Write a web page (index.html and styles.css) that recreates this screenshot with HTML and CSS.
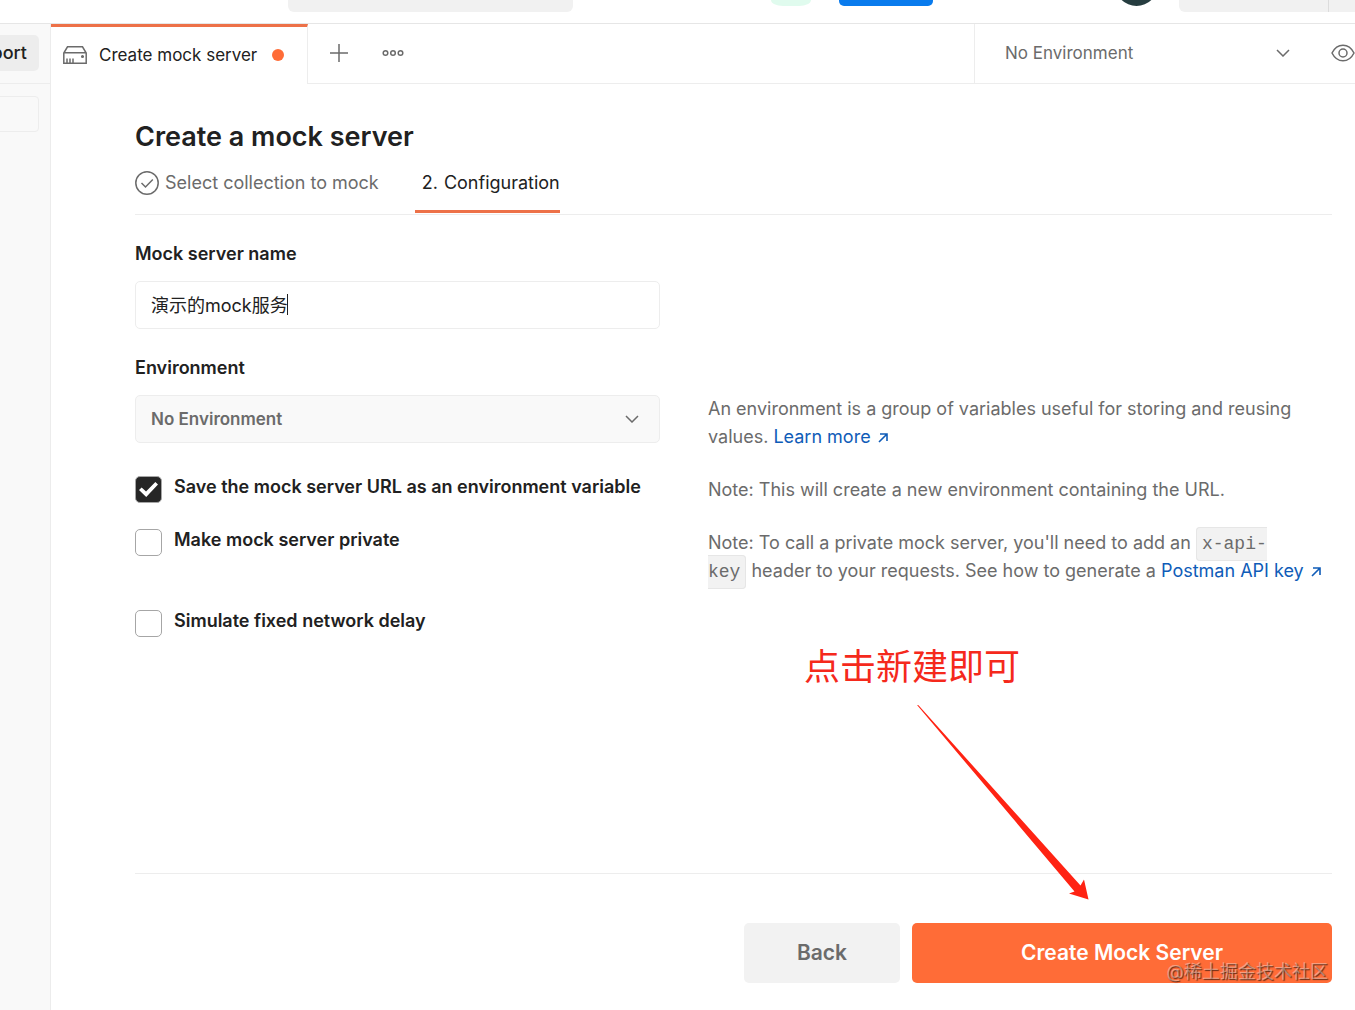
FILE: index.html
```
<!DOCTYPE html>
<html lang="en">
<head>
  <meta charset="UTF-8">
  <meta name="viewport" content="width=device-width, initial-scale=1.0">
  <title>Create a mock server</title>
  <link rel="stylesheet" href="styles.css">
</head>
<body>
  <header class="topbar">
    <div class="topbar-search"></div>
    <div class="topbar-sync"></div>
    <div class="topbar-invite"></div>
    <div class="topbar-avatar"></div>
    <div class="topbar-plan"><div class="topbar-plan-menu"></div></div>
  </header>

  <div class="workspace">
    <aside class="sidebar">
      <div class="sidebar-header">
        <button type="button" class="import-btn">Import</button>
      </div>
      <div class="sidebar-filter"></div>
    </aside>

    <main class="main">
      <div class="tabs">
        <div class="tab">
          <svg class="tab-icon" width="24" height="18" viewBox="0 0 24 18" fill="none" stroke="#6b6b6b" stroke-width="1.5">
            <path d="M.8 17.2V7L4.500 .8h15L23.200 7v10.200zM.8 6.800h22.400M4 17v-4.500M7 17v-4.500M10 17v-4.500"/>
            <circle cx="19.500" cy="10.500" r=".8" fill="#6b6b6b"/>
          </svg>
          <span>Create mock server</span>
          <span class="unsaved-dot"></span>
        </div>
        <div class="tab-actions">
          <button type="button" class="icon-btn" aria-label="New tab">
            <svg width="18" height="18" viewBox="0 0 18 18" stroke="#6b6b6b" stroke-width="1.5"><path d="M9 0v18M0 9h18"/></svg>
          </button>
          <button type="button" class="icon-btn" aria-label="Tab options">
            <svg width="22" height="8" viewBox="0 0 22 8" fill="none" stroke="#6b6b6b" stroke-width="1.500">
              <circle cx="3.500" cy="4" r="2.300"/><circle cx="11" cy="4" r="2.300"/><circle cx="18.500" cy="4" r="2.300"/>
            </svg>
          </button>
        </div>
        <div class="env-bar">
          <div class="select-box env-select">
            <select aria-label="Active environment">
              <option>No Environment</option>
            </select>
            <svg class="chevron" width="14" height="8" viewBox="0 0 14 8" fill="none" stroke="#6b6b6b" stroke-width="1.500"><path d="M1 1l6 6 6-6"/></svg>
          </div>
          <button type="button" class="icon-btn" aria-label="Environment quick look">
            <svg width="24" height="18" viewBox="0 0 24 18" fill="none" stroke="#6b6b6b" stroke-width="1.500">
              <path d="M1 9C3.500 4 7.500 1.200 12 1.200S20.500 4 23 9c-2.500 5-6.500 7.800-11 7.800S3.500 14 1 9z"/>
              <circle cx="12" cy="9" r="4"/>
            </svg>
          </button>
        </div>
      </div>

      <form class="content">
        <h1>Create a mock server</h1>
        <div class="steps">
          <div class="step">
            <svg width="24" height="24" viewBox="0 0 24 24" fill="none" stroke="#6b6b6b" stroke-width="1.500">
              <circle cx="12" cy="12" r="11.200"/><path d="M6.500 12l4 4 7.300-7.500"/>
            </svg>
            <span>Select collection to mock</span>
          </div>
          <div class="step active"><span>2.</span><span>Configuration</span></div>
        </div>

        <div class="form-grid">
          <div class="form-group">
            <label for="name">Mock server name</label>
            <div class="name-box">
              <input type="text" id="name" name="name" value="演示的mock服务">
              <span class="caret"></span>
            </div>
          </div>

          <label class="env-label" for="environment">Environment</label>
          <div class="select-box form-select">
            <select id="environment" name="environment">
              <option>No Environment</option>
            </select>
            <svg class="chevron" width="14" height="8" viewBox="0 0 14 8" fill="none" stroke="#6b6b6b" stroke-width="1.500"><path d="M1 1l6 6 6-6"/></svg>
          </div>
          <p class="help">An environment is a group of variables useful for storing and reusing values. <a href="#">Learn more <svg class="link-arrow" width="10" height="10" viewBox="0 0 10 10" fill="none" stroke="currentColor" stroke-width="1.600"><path d="M1 9l7.500-7.500M2 1h7v7"/></svg></a></p>

          <div class="check-row">
            <input type="checkbox" id="save-url" checked>
            <label for="save-url">Save the mock server URL as an environment variable</label>
          </div>
          <p class="help">Note: This will create a new environment containing the URL.</p>

          <div class="check-row">
            <input type="checkbox" id="private">
            <label for="private">Make mock server private</label>
          </div>
          <p class="help">Note: To call a private mock server, you'll need to add an <code>x-api-<br>key</code> header to your requests. See how to generate a <a href="#">Postman API key <svg class="link-arrow" width="10" height="10" viewBox="0 0 10 10" fill="none" stroke="currentColor" stroke-width="1.600"><path d="M1 9l7.500-7.500M2 1h7v7"/></svg></a></p>

          <div class="check-row">
            <input type="checkbox" id="delay">
            <label for="delay">Simulate fixed network delay</label>
          </div>
        </div>

        <div class="footer">
          <button type="button" class="back-btn">Back</button>
          <button type="submit" class="create-btn">Create Mock Server</button>
        </div>
      </form>
    </main>
  </div>

  <!-- tutorial markup over the page -->
  <div class="note">点击新建即可</div>
  <svg class="note-arrow" width="172" height="196" viewBox="0 0 172 196" fill="#ff2313">
    <path d="M0 0L1.500 .3 163.500 180.500 167 174.500 171.500 194.500 152 188.500 157.500 186.500z"/>
  </svg>
  <div class="watermark">@稀土掘金技术社区</div>
</body>
</html>
```
FILE: styles.css
```
* {
  box-sizing: border-box;
}

body {
  position: relative;
  display: flex;
  flex-direction: column;
  min-height: 100vh;
  margin: 0;
  overflow-x: hidden;
  background: #fff;
  color: #212121;
  font-family: Inter, "Noto Sans CJK SC", sans-serif;
  font-size: 18px;
  line-height: 28px;
}

button, input, select {
  font: inherit;
  color: inherit;
}

button {
  border: none;
  cursor: pointer;
}

svg {
  display: block;
  flex: none;
}

a {
  color: #0f5cb8;
  text-decoration: none;
}

/* top bar */
.topbar {
  display: flex;
  align-items: flex-start;
  height: 24px;
  padding-left: 288px;
  overflow: hidden;
  border-bottom: 1px solid #e6e6e6;
}

.topbar-search {
  width: 285px;
  height: 12px;
  border-radius: 0 0 6px 6px;
  background: #f1f1f1;
}

.topbar-sync {
  width: 40px;
  height: 6px;
  margin-left: auto;
  border-radius: 0 0 12px 12px / 0 0 6px 6px;
  background: #e0fbee;
}

.topbar-invite {
  width: 94px;
  height: 6px;
  margin-left: 28px;
  border-radius: 0 0 5px 5px;
  background: #097bed;
}

.topbar-avatar {
  width: 43px;
  height: 43px;
  margin: -37px 21px 0 182px;
  border-radius: 50%;
  background: #263d40;
}

.topbar-plan {
  display: flex;
  justify-content: flex-end;
  width: 176px;
  height: 12px;
  border-radius: 0 0 0 6px;
  background: #f1f1f1;
}

.topbar-plan-menu {
  width: 27px;
  border-left: 1px solid #dcdcdc;
}

.workspace {
  display: flex;
  flex: 1;
}

/* sidebar */
.sidebar {
  width: 51px;
  flex: none;
  overflow: hidden;
  border-right: 1px solid #ececec;
  background: #f9f9f9;
}

.sidebar-header {
  display: flex;
  justify-content: flex-end;
  align-items: center;
  height: 60px;
  padding: 0 11px 2px 0;
  border-bottom: 1px solid #ededed;
}

.import-btn {
  flex: none;
  height: 36px;
  padding: 0 12px;
  border-radius: 5px;
  background: #ededed;
  font-weight: 500;
}

.sidebar-filter {
  height: 36px;
  margin: 12px 11px 0 -6px;
  border: 1px solid #ededed;
  border-radius: 4px;
}

/* tabs */
.main {
  display: flex;
  flex: 1;
  flex-direction: column;
  min-width: 0;
}

.tabs {
  display: flex;
  height: 60px;
  font-size: 17px;
}

.tab {
  display: flex;
  align-items: center;
  width: 257px;
  padding: 0 23px 2px 12px;
  border-top: 3px solid #ed7148;
  border-right: 1px solid #ededed;
}

.tab-icon {
  margin-right: 12px;
}

.unsaved-dot {
  width: 12px;
  height: 12px;
  margin-left: auto;
  border-radius: 50%;
  background: #ff6c37;
}

.tab-actions {
  display: flex;
  flex: 1;
  align-items: center;
  gap: 34px;
  padding: 0 0 2px 22px;
  border-bottom: 1px solid #ededed;
}

.icon-btn {
  flex: none;
  padding: 0;
  background: none;
}

.env-bar {
  display: flex;
  align-items: center;
  width: 381px;
  padding-bottom: 2px;
  border-left: 1px solid #ededed;
  border-bottom: 1px solid #ededed;
}

.select-box {
  position: relative;
  display: flex;
}

.select-box select {
  width: 100%;
  appearance: none;
  border: none;
  background: none;
  color: #6b6b6b;
}

.chevron {
  position: absolute;
  top: 20px;
  right: 21px;
  pointer-events: none;
}

.env-select {
  flex: 1;
  margin-right: 20px;
}

.env-select select {
  height: 48px;
  padding: 0 30px;
}

/* form */
.content {
  display: flex;
  flex: 1;
  flex-direction: column;
  padding: 36px 23px 27px 84px;
}

h1 {
  margin: 0;
  font-size: 27px;
  font-weight: 600;
  line-height: 34px;
}

.steps {
  display: flex;
  gap: 36px;
  margin-bottom: 25px;
  border-bottom: 1px solid #ededed;
}

.step {
  display: flex;
  align-items: center;
  gap: 6px;
  height: 60px;
  padding-bottom: 2px;
  color: #6b6b6b;
}

.step.active {
  height: 59px;
  padding: 2px 0 0 7px;
  border-bottom: 3px solid #ed7148;
  color: #212121;
}

.form-grid {
  display: grid;
  grid-template-columns: 525fr 624fr;
  gap: 25px 48px;
}

.form-group {
  grid-column: 1;
}

label {
  font-weight: 600;
}

.form-group label {
  display: block;
  margin-bottom: 13px;
}

.name-box {
  position: relative;
}

.name-box input {
  display: block;
  width: 100%;
  height: 48px;
  padding: 0 15px 2px;
  border: 1px solid #ededed;
  border-radius: 5px;
  background: #fff;
  outline: none;
}

.caret {
  position: absolute;
  top: 13px;
  left: 152px;
  width: 1px;
  height: 21px;
  background: #212121;
}

.env-label {
  grid-column: 1 / 3;
  margin-bottom: -12px;
}

.form-select {
  align-self: start;
}

.form-select select {
  height: 48px;
  padding: 0 15px;
  border: 1px solid #ededed;
  border-radius: 5px;
  background: #f9f9f9;
  font-size: 17px;
  font-weight: 600;
}

.help {
  margin: 0;
  color: #6b6b6b;
}

.link-arrow {
  display: inline;
  margin-left: 2px;
}

code {
  padding: 6px 5px;
  border: 1px solid #e6e6e6;
  border-radius: 4px;
  background: #f2f2f2;
  font-family: "Liberation Mono", monospace;
  font-size: 18px;
  line-height: 1;
}

.check-row {
  display: flex;
  align-items: flex-start;
  gap: 12px;
}

.check-row label {
  line-height: 22px;
}

.check-row input {
  display: grid;
  flex: none;
  place-items: center;
  width: 27px;
  height: 27px;
  margin: 0;
  appearance: none;
  border: 1px solid #a6a6a6;
  border-radius: 5px;
  background: #fff;
}

.check-row input:checked {
  background: #262626;
}

.check-row input:checked::before {
  content: "";
  width: 19px;
  height: 15px;
  background: #fff;
  clip-path: polygon(0 54%, 14% 36%, 37% 64%, 86% 0, 100% 16%, 38% 100%);
}

.footer {
  display: flex;
  justify-content: flex-end;
  gap: 12px;
  margin-top: auto;
  padding-top: 49px;
  border-top: 1px solid #ededed;
}

.footer button {
  height: 60px;
  border-radius: 5px;
  font-size: 21px;
  font-weight: 600;
}

.back-btn {
  width: 156px;
  background: #f2f2f2;
  color: #6b6b6b;
}

.create-btn {
  width: 420px;
  background: #ff6c37;
  color: #fff;
}

/* annotations */
.note {
  position: absolute;
  top: 638px;
  left: 804px;
  color: #f5291c;
  font-family: "Noto Sans CJK SC", sans-serif;
  font-size: 36px;
  line-height: 52px;
}

.note-arrow {
  position: absolute;
  top: 705px;
  left: 917px;
}

.watermark {
  position: absolute;
  right: 27px;
  bottom: 24px;
  color: rgba(255, 255, 255, 0.4);
  text-shadow: 1px 1px 1px rgba(0, 0, 0, 0.6);
}
```
